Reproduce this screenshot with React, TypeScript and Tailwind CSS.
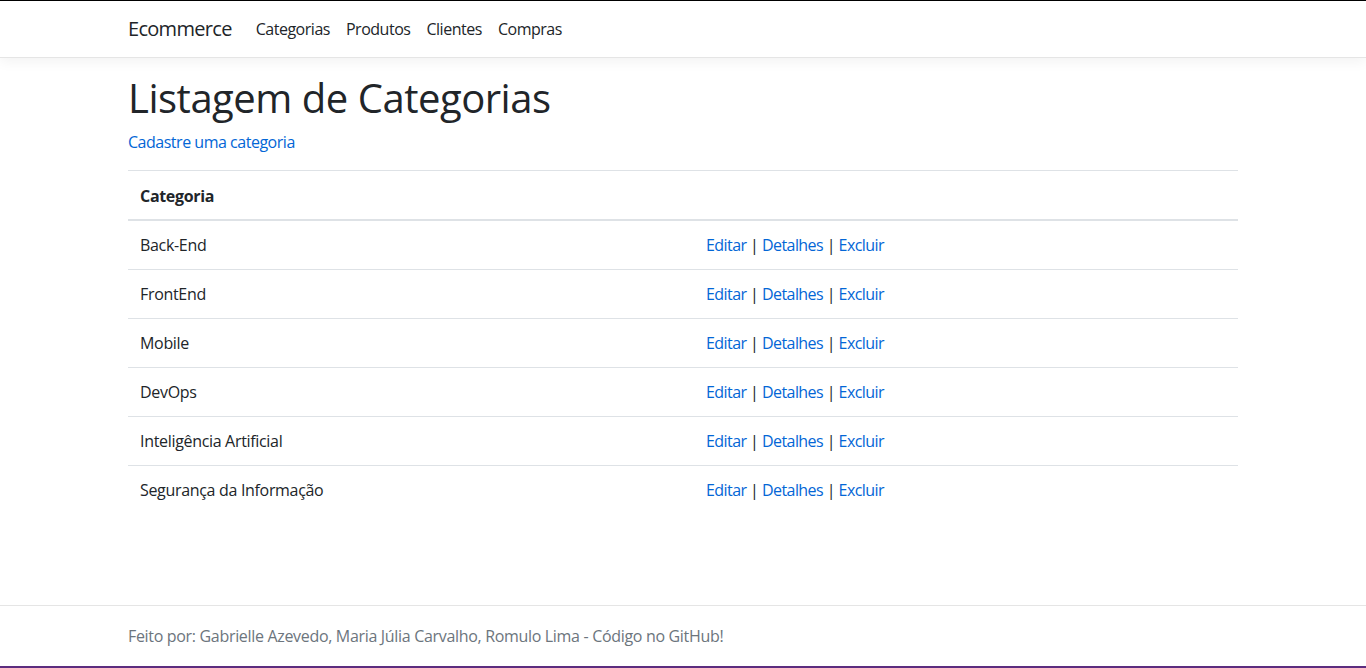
import React from "react"

const categorias = [
  "Back-End",
  "FrontEnd",
  "Mobile",
  "DevOps",
  "Inteligência Artificial",
  "Segurança da Informação",
]

const font = { fontFamily: "'Segoe UI', 'Open Sans', 'Noto Sans', sans-serif" }

export default function App() {
  return (
    <div
      className="flex flex-col h-[668px] bg-white text-[#212529] text-base leading-6 tracking-[-0.02em] border-t border-black overflow-hidden"
      style={font}
    >
      <nav className="border-b border-[#e5e5e5] shadow-[0_4px_12px_rgba(0,0,5,0.05)] bg-white">
        <div className="w-[1110px] mx-auto flex items-center py-2 h-14">
          <a className="text-[20px] leading-[30px] py-[5px] mr-4 tracking-[-0.035em] text-[#212529]">Ecommerce</a>
          <ul className="flex">
            {["Categorias", "Produtos", "Clientes", "Compras"].map((l) => (
              <li key={l}>
                <a className="block px-2 py-2 tracking-[-0.03em] text-[#212529]">{l}</a>
              </li>
            ))}
          </ul>
        </div>
      </nav>

      <main className="w-[1110px] mx-auto mt-4 flex-1">
        <h1 className="text-[40px] leading-[48px] font-medium tracking-[-0.012em] mb-2">Listagem de Categorias</h1>
        <p className="mb-4">
          <a className="text-[#0366d6] tracking-[-0.03em]">Cadastre uma categoria</a>
        </p>
        <table className="w-full border-collapse">
          <thead>
            <tr>
              <th className="w-[566px] text-left font-bold p-3 pt-[13px] pb-[11px] border-t border-[#dee2e6] border-b-2">
                Categoria
              </th>
              <th className="p-3 border-t border-[#dee2e6] border-b-2"></th>
            </tr>
          </thead>
          <tbody>
            {categorias.map((c, i) => (
              <tr key={c}>
                <td className={"p-3 border-[#dee2e6] " + (i > 0 ? "border-t" : "")}>{c}</td>
                <td className={"p-3 tracking-[-0.035em] border-[#dee2e6] " + (i > 0 ? "border-t" : "")}>
                  <a className="text-[#0366d6]">Editar</a> |{" "}
                  <a className="text-[#0366d6]">Detalhes</a> |{" "}
                  <a className="text-[#0366d6]">Excluir</a>
                </td>
              </tr>
            ))}
          </tbody>
        </table>
      </main>

      <footer className="border-t border-[#e5e5e5] h-[61px] leading-[60px] text-[#6c757d]">
        <div className="w-[1110px] mx-auto">
          Feito por: Gabrielle Azevedo, Maria Júlia Carvalho, Romulo Lima - Código no GitHub!
        </div>
      </footer>
      <div className="h-[2px] bg-[#5c2d7f]"></div>
    </div>
  )
}
